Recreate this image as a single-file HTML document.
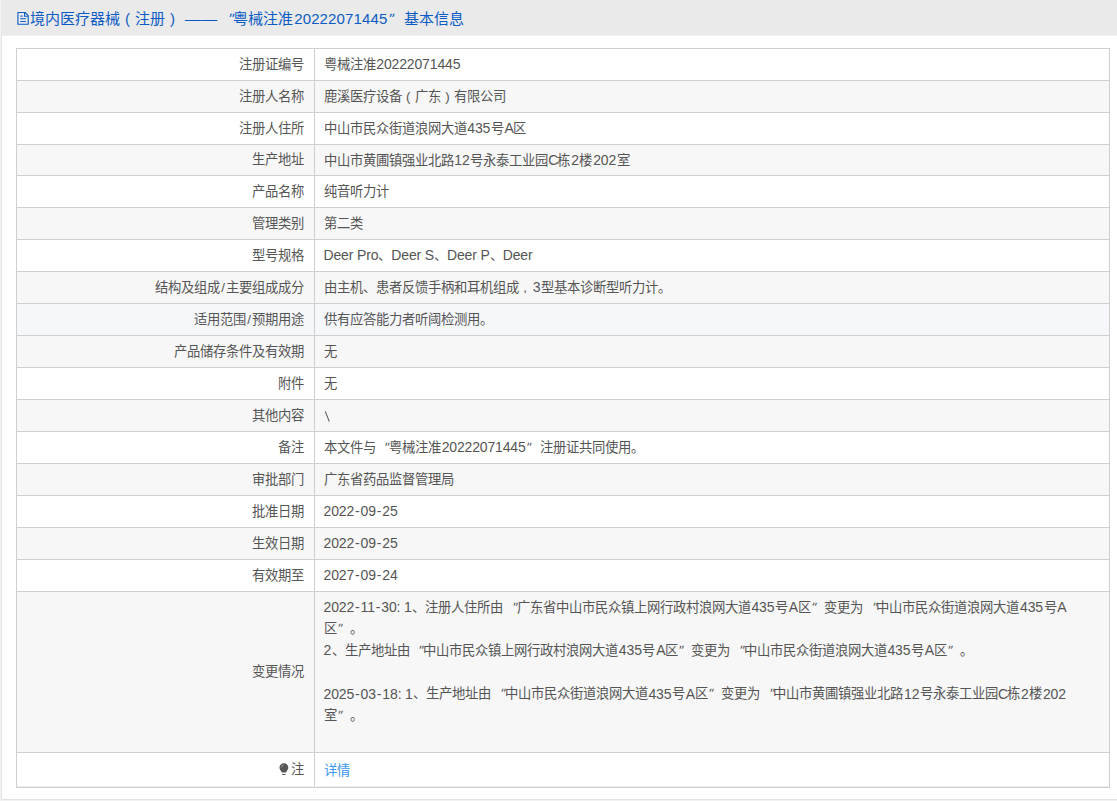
<!DOCTYPE html>
<html lang="zh-CN">
<head>
<meta charset="utf-8">
<style>
html,body{margin:0;padding:0;}
body{width:1117px;height:801px;overflow:hidden;background:#f2f2f2;position:relative;font-family:"Liberation Sans",sans-serif;}
.wrap{position:absolute;left:1px;top:0;width:1120px;height:799px;background:#fff;border-left:1px solid #e2e2e2;border-bottom:1px solid #e2e2e2;}
.hd{position:absolute;left:1px;top:0;width:1116px;height:35px;background:#eaeaea;}
.hdl{position:absolute;left:2px;top:35px;width:1115px;height:1px;background:#eef1f8;}
.title{position:absolute;left:17px;top:9px;font-size:15px;line-height:20px;color:#0a5bc4;white-space:nowrap;}
.doc{position:absolute;left:14px;top:9px;}
.title .tt{position:absolute;left:13px;top:0;}
.tb{position:absolute;left:16px;width:1092px;border-left:1px solid #cfcfcf;border-right:1px solid #cfcfcf;border-top:1px solid #cfcfcf;box-sizing:content-box;}
.r{position:absolute;left:17px;width:1092px;}
.r.w{background:#fff;}
.r.g{background:#f7f7f7;}
.r.h{background:#f5f7fb;}
.hl{position:absolute;left:16px;width:1094px;height:1px;background:#cfcfcf;}
.vl{position:absolute;left:314px;width:1px;background:#cfcfcf;}
.lab{position:absolute;left:17px;width:287px;text-align:right;font-size:13.33px;color:#555;white-space:nowrap;}
.val{position:absolute;left:323.5px;font-size:13.33px;color:#555;white-space:nowrap;}
.val.multi{line-height:21.64px;padding-top:4.7px;}
.a{letter-spacing:-0.15px;position:relative;top:0.4px;font-size:14px;}
.ql,.qr{display:inline-block;width:1em;}
.ql{text-align:right;}
.qr{text-align:left;}
.link{color:#3a96ee;position:relative;top:1px;}
.bulb{display:inline-block;vertical-align:-2px;margin-right:3px;position:relative;left:1px;}
.pl,.pr{display:inline-block;width:1em;text-align:center;}
.dash{display:inline-block;transform:translateX(0.8px) scaleX(1.078);transform-origin:0 0;}
.ql i,.qr i{display:inline-block;font-style:normal;transform:skewX(-18deg);}
.hy{font-weight:normal;margin:0 1px;}
.pl1{padding-left:0.8px;}
.pr1{padding-right:0.6px;}
.qr i{margin-left:0;}
.qr{box-sizing:border-box;}
.prc{margin-right:-0.8px;}
.pra{letter-spacing:-0.5px;}
.sl{padding:0 1px;}
.bl{position:absolute;left:17px;top:786px;width:1092px;height:1px;background:#eef0f8;}
.cm{display:inline-block;width:1em;text-align:center;}
.title .a{font-size:15px;letter-spacing:0.15px;top:0;}
.title .qr i{margin-left:0;}
.title .pr1{padding-right:0;}
.title .qr{width:16.5px;}

</style>
</head>
<body>
<div class="wrap"></div>
<div class="hd"></div>
<div class="hdl"></div>
<svg class="doc" width="20" height="19" viewBox="0 0 20 19"><path d="M3.9 3.5H11.1L14.2 6.7V15.3H3.9Z" fill="none" stroke="#0a5bc4" stroke-width="1.1" stroke-linejoin="round"/><path d="M10.6 3.7V7.3H14" fill="none" stroke="#0a5bc4" stroke-width="1.1"/><path d="M6.2 7.1H8.8M6.2 9.7H11.9M6.2 12.5H11.9" stroke="#0a5bc4" stroke-width="1"/></svg><div class="title"><span class="tt">境内医疗器械<span class="pl">(</span>注册<span class="pr">)</span> <span class="dash">——</span> <span class="ql"><i>&quot;</i></span>粤械注准<span class="a pl1 pr1">20222071445</span><span class="qr"><i>&quot;</i></span>基本信息</span></div>
<div class="tb" style="top:48px;height:739px"></div>
<div class="r w" style="top:49px;height:31px"></div>
<div class="hl" style="top:80px"></div>
<div class="lab" style="top:49px;height:31px;line-height:31px">注册证编号</div>
<div class="val" style="top:49px;height:31px;line-height:31px">粤械注准<span class="a pl1">20222071445</span></div>
<div class="r g" style="top:81px;height:31px"></div>
<div class="hl" style="top:112px"></div>
<div class="lab" style="top:81px;height:31px;line-height:31px">注册人名称</div>
<div class="val" style="top:81px;height:31px;line-height:31px">鹿溪医疗设备<span class="pl">(</span>广东<span class="pr">)</span>有限公司</div>
<div class="r w" style="top:113px;height:31px"></div>
<div class="hl" style="top:144px"></div>
<div class="lab" style="top:113px;height:31px;line-height:31px">注册人住所</div>
<div class="val" style="top:113px;height:31px;line-height:31px">中山市民众街道浪网大道<span class="a pl1 pr1">435</span>号<span class="a pl1 pra">A</span>区</div>
<div class="r g" style="top:145px;height:30px"></div>
<div class="hl" style="top:175px"></div>
<div class="lab" style="top:145px;height:30px;line-height:30px">生产地址</div>
<div class="val" style="top:145px;height:30px;line-height:30px">中山市黄圃镇强业北路<span class="a pl1 pr1">12</span>号永泰工业园<span class="a prc">C</span>栋<span class="a pl1 pr1">2</span>楼<span class="a pl1 pr1">202</span>室</div>
<div class="r w" style="top:176px;height:31px"></div>
<div class="hl" style="top:207px"></div>
<div class="lab" style="top:176px;height:31px;line-height:31px">产品名称</div>
<div class="val" style="top:176px;height:31px;line-height:31px">纯音听力计</div>
<div class="r g" style="top:208px;height:31px"></div>
<div class="hl" style="top:239px"></div>
<div class="lab" style="top:208px;height:31px;line-height:31px">管理类别</div>
<div class="val" style="top:208px;height:31px;line-height:31px">第二类</div>
<div class="r w" style="top:240px;height:31px"></div>
<div class="hl" style="top:271px"></div>
<div class="lab" style="top:240px;height:31px;line-height:31px">型号规格</div>
<div class="val" style="top:240px;height:31px;line-height:31px"><span class="a">Deer Pro</span>、<span class="a">Deer S</span>、<span class="a">Deer P</span>、<span class="a">Deer</span></div>
<div class="r g" style="top:272px;height:31px"></div>
<div class="hl" style="top:303px"></div>
<div class="lab" style="top:272px;height:31px;line-height:31px">结构及组成<span class="sl">/</span>主要组成成分</div>
<div class="val" style="top:272px;height:31px;line-height:31px">由主机、患者反馈手柄和耳机组成<span class="cm">,</span><span class="a pl1 pr1">3</span>型基本诊断型听力计。</div>
<div class="r h" style="top:304px;height:31px"></div>
<div class="hl" style="top:335px"></div>
<div class="lab" style="top:304px;height:31px;line-height:31px">适用范围<span class="sl">/</span>预期用途</div>
<div class="val" style="top:304px;height:31px;line-height:31px">供有应答能力者听阈检测用。</div>
<div class="r g" style="top:336px;height:31px"></div>
<div class="hl" style="top:367px"></div>
<div class="lab" style="top:336px;height:31px;line-height:31px">产品储存条件及有效期</div>
<div class="val" style="top:336px;height:31px;line-height:31px">无</div>
<div class="r w" style="top:368px;height:31px"></div>
<div class="hl" style="top:399px"></div>
<div class="lab" style="top:368px;height:31px;line-height:31px">附件</div>
<div class="val" style="top:368px;height:31px;line-height:31px">无</div>
<div class="r g" style="top:400px;height:31px"></div>
<div class="hl" style="top:431px"></div>
<div class="lab" style="top:400px;height:31px;line-height:31px">其他内容</div>
<div class="val" style="top:400px;height:31px;line-height:31px"><svg style="position:absolute;left:0;top:9px" width="8" height="14" viewBox="0 0 8 14"><path d="M1.3 2.4L5.3 12.6" stroke="#555" stroke-width="1.05"/></svg></div>
<div class="r w" style="top:432px;height:31px"></div>
<div class="hl" style="top:463px"></div>
<div class="lab" style="top:432px;height:31px;line-height:31px">备注</div>
<div class="val" style="top:432px;height:31px;line-height:31px">本文件与<span class="ql"><i>&quot;</i></span>粤械注准<span class="a pl1 pr1">20222071445</span><span class="qr"><i>&quot;</i></span>注册证共同使用。</div>
<div class="r g" style="top:464px;height:31px"></div>
<div class="hl" style="top:495px"></div>
<div class="lab" style="top:464px;height:31px;line-height:31px">审批部门</div>
<div class="val" style="top:464px;height:31px;line-height:31px">广东省药品监督管理局</div>
<div class="r w" style="top:496px;height:31px"></div>
<div class="hl" style="top:527px"></div>
<div class="lab" style="top:496px;height:31px;line-height:31px">批准日期</div>
<div class="val" style="top:496px;height:31px;line-height:31px"><span class="a">2022<b class="hy">-</b>09<b class="hy">-</b>25</span></div>
<div class="r g" style="top:528px;height:31px"></div>
<div class="hl" style="top:559px"></div>
<div class="lab" style="top:528px;height:31px;line-height:31px">生效日期</div>
<div class="val" style="top:528px;height:31px;line-height:31px"><span class="a">2022<b class="hy">-</b>09<b class="hy">-</b>25</span></div>
<div class="r w" style="top:560px;height:31px"></div>
<div class="hl" style="top:591px"></div>
<div class="lab" style="top:560px;height:31px;line-height:31px">有效期至</div>
<div class="val" style="top:560px;height:31px;line-height:31px"><span class="a">2027<b class="hy">-</b>09<b class="hy">-</b>24</span></div>
<div class="r g" style="top:592px;height:160px"></div>
<div class="hl" style="top:752px"></div>
<div class="lab" style="top:592px;height:160px;line-height:160px">变更情况</div>
<div class="val multi" style="top:592px"><span class="a pr1">2022<b class="hy">-</b>11<b class="hy">-</b>30: 1</span>、注册人住所由<span class="ql"><i>&quot;</i></span>广东省中山市民众镇上网行政村浪网大道<span class="a pl1 pr1">435</span>号<span class="a pl1 pra">A</span>区<span class="qr"><i>&quot;</i></span>变更为<span class="ql"><i>&quot;</i></span>中山市民众街道浪网大道<span class="a pl1 pr1">435</span>号<span class="a pl1 pra">A</span><br>区<span class="qr"><i>&quot;</i></span>。<br><span class="a pr1">2</span>、生产地址由<span class="ql"><i>&quot;</i></span>中山市民众镇上网行政村浪网大道<span class="a pl1 pr1">435</span>号<span class="a pl1 pra">A</span>区<span class="qr"><i>&quot;</i></span>变更为<span class="ql"><i>&quot;</i></span>中山市民众街道浪网大道<span class="a pl1 pr1">435</span>号<span class="a pl1 pra">A</span>区<span class="qr"><i>&quot;</i></span>。<br><br><span class="a pr1">2025<b class="hy">-</b>03<b class="hy">-</b>18: 1</span>、生产地址由<span class="ql"><i>&quot;</i></span>中山市民众街道浪网大道<span class="a pl1 pr1">435</span>号<span class="a pl1 pra">A</span>区<span class="qr"><i>&quot;</i></span>变更为<span class="ql"><i>&quot;</i></span>中山市黄圃镇强业北路<span class="a pl1 pr1">12</span>号永泰工业园<span class="a prc">C</span>栋<span class="a pl1 pr1">2</span>楼<span class="a pl1">202</span><br>室<span class="qr"><i>&quot;</i></span>。</div>
<div class="r w" style="top:753px;height:34px"></div>
<div class="hl" style="top:787px"></div>
<div class="lab" style="top:753px;height:34px;line-height:34px"><svg class="bulb" width="10" height="13" viewBox="0 0 10 13"><path d="M4.9 0.3C7.4 0.3 9.3 2.2 9.3 4.6C9.3 6.3 8.4 7.3 7.6 8.2L7.1 9.6H2.7L2.2 8.2C1.4 7.3 0.5 6.3 0.5 4.6C0.5 2.2 2.4 0.3 4.9 0.3Z" fill="#555"/><path d="M2.3 4.6A2.6 2.6 0 0 1 4.9 2" fill="none" stroke="#fff" stroke-opacity="0.5" stroke-width="0.7"/><rect x="3.2" y="11" width="3.2" height="1" fill="#555"/></svg>注</div>
<div class="val" style="top:753px;height:34px;line-height:34px"><span class="link">详情</span></div>
<div class="vl" style="top:48px;height:739px"></div>
<div class="bl"></div>
</body>
</html>
